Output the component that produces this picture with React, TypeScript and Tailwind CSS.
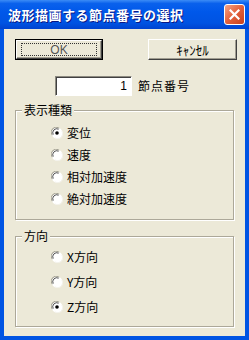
import React from "react"

const jp = "font-['MS_UI_Gothic','Noto_Sans_CJK_JP',sans-serif]"

function Radio({ checked }: { checked?: boolean }) {
  return (
    <svg width="12" height="12" viewBox="0 0 12 12" className="shrink-0">
      <circle cx="6" cy="6" r="5.5" fill="#fff" />
      <path d="M1.2 8.2 A5 5 0 0 1 8.2 1.2" fill="none" stroke="#9d9a8c" strokeWidth="1" />
      <path d="M2.2 7.6 A4 4 0 0 1 7.6 2.2" fill="none" stroke="#505050" strokeWidth="1" />
      <path d="M10.8 3.8 A5 5 0 0 1 3.8 10.8" fill="none" stroke="#f4f3ee" strokeWidth="1" />
      {checked && <circle cx="6" cy="6" r="1.8" fill="#000" />}
    </svg>
  )
}

function Option({ label, checked }: { label: string; checked?: boolean }) {
  return (
    <div className="flex items-center gap-[4px]">
      <Radio checked={checked} />
      <span className={`${jp} text-[12px] leading-none text-black`}>{label}</span>
    </div>
  )
}

function Group({ title, children, className }: { title: string; children: React.ReactNode; className: string }) {
  return (
    <div className={`relative ml-[11px] w-[219px] border border-[#aca899] shadow-[inset_1px_1px_0_#fff,1px_1px_0_#fff] ${className}`}>
      <span className={`${jp} absolute -top-[8px] left-[6px] bg-[#ece9d8] px-[2px] text-[12px] leading-[14px] text-black`}>{title}</span>
      {children}
    </div>
  )
}

export default function App() {
  return (
    <div className="flex h-[340px] w-[249px] flex-col bg-[#0054e3]">
      {/* TITLE BAR */}
      <div className="flex h-[29px] items-center justify-between bg-[linear-gradient(#3c8cf6_0%,#0a61ec_12%,#0058ea_40%,#0053e2_80%,#0043cf_100%)] pl-[8px] pr-[4px]">
        <span className={`${jp} text-[13px] font-bold tracking-[0.5px] text-white [text-shadow:1px_1px_0_#0a1883]`}>
          波形描画する節点番号の選択
        </span>
        <div className="flex h-[21px] w-[21px] items-center justify-center rounded-[3px] border border-white bg-[linear-gradient(135deg,#f3a486,#e2603b_50%,#c8401c)]">
          <svg width="11" height="11" viewBox="0 0 11 11">
            <path d="M1.5 1.5 L9.5 9.5 M9.5 1.5 L1.5 9.5" stroke="#fff" strokeWidth="2.2" strokeLinecap="square" />
          </svg>
        </div>
      </div>

      {/* CLIENT AREA */}
      <div className="mx-[4px] mb-[4px] flex flex-1 flex-col bg-[#ece9d8]">
        <div className="mt-[10px] flex h-[21px] items-center">
          <div className="ml-[11px] h-[21px] w-[88px] border border-black">
            <div className="flex h-full w-full items-center justify-center border-b border-r border-[#404040] border-l-white border-t-white border-l border-t shadow-[inset_-1px_-1px_0_#a09d90]">
              <div className="flex h-[13px] w-[76px] items-center justify-center border border-dotted border-[#333]">
                <span className="font-['Liberation_Sans',sans-serif] text-[12px] leading-none text-[#555]">OK</span>
              </div>
            </div>
          </div>
          <div className="ml-[45px] flex h-[21px] w-[89px] items-center justify-center border-b border-r border-[#404040] border-l border-t border-l-white border-t-white shadow-[inset_-1px_-1px_0_#a09d90]">
            <span className={`${jp} text-[13px] leading-none text-black`}>ｷｬﾝｾﾙ</span>
          </div>
        </div>

        <div className="mt-[16px] flex h-[20px] items-center">
          <div className="ml-[51px] flex h-[20px] w-[77px] items-center justify-end border border-b-white border-l-[#8c8a80] border-r-white border-t-[#8c8a80] bg-white pr-[4px] shadow-[inset_1px_1px_0_#404040]">
            <span className="font-['Liberation_Sans',sans-serif] text-[12px] leading-none text-black">1</span>
          </div>
          <span className={`${jp} ml-[6px] text-[12px] leading-none tracking-[1px] text-black`}>節点番号</span>
        </div>

        <Group title="表示種類" className="mt-[14px] h-[110px] pl-[35px] pt-[11px]">
          <div className="flex h-[22px] items-center"><Option label="変位" checked /></div>
          <div className="flex h-[22px] items-center"><Option label="速度" /></div>
          <div className="flex h-[22px] items-center"><Option label="相対加速度" /></div>
          <div className="flex h-[22px] items-center"><Option label="絶対加速度" /></div>
        </Group>

        <Group title="方向" className="mt-[16px] h-[91px] pl-[35px] pt-[7px]">
          <div className="flex h-[25px] items-center"><Option label="X方向" /></div>
          <div className="flex h-[25px] items-center"><Option label="Y方向" /></div>
          <div className="flex h-[25px] items-center"><Option label="Z方向" checked /></div>
        </Group>
      </div>
    </div>
  )
}
